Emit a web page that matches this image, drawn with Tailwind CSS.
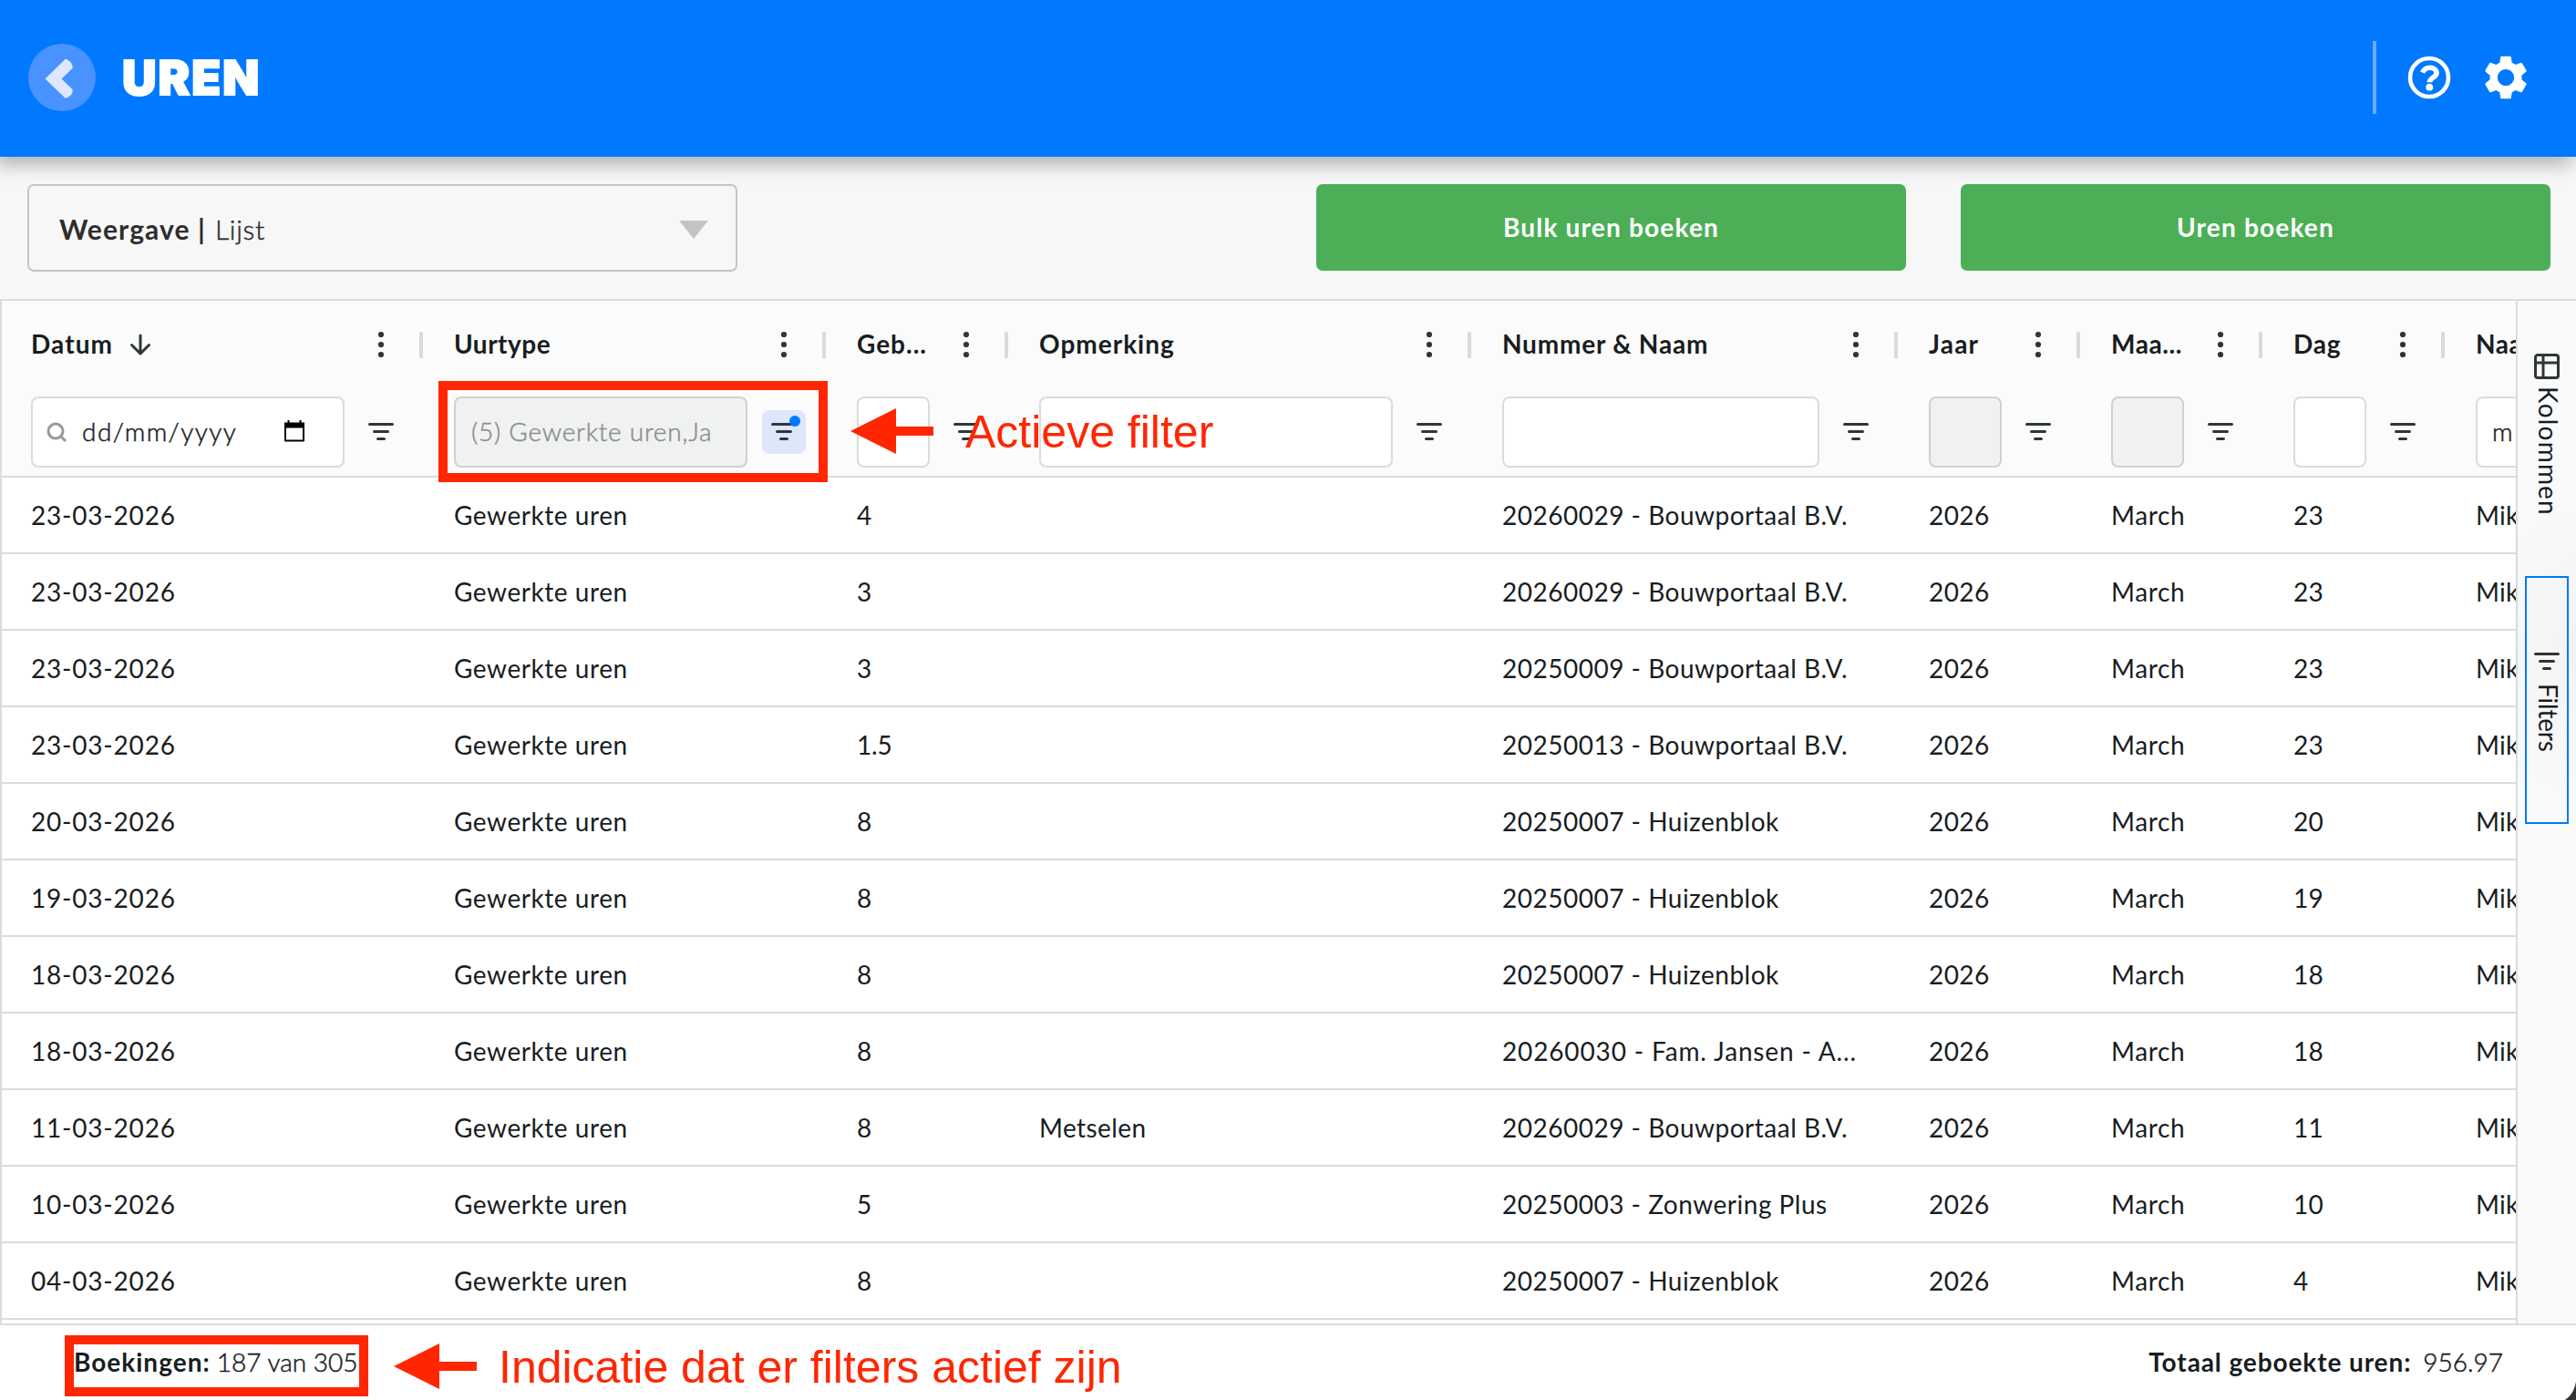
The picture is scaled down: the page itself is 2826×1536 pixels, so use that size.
<!DOCTYPE html>
<html lang="nl">
<head>
<meta charset="utf-8">
<title>Uren</title>
<script src="https://cdn.jsdelivr.net/npm/@tailwindcss/browser@4"></script>
</head>
<body class="relative flex h-[1536px] w-[2826px] flex-col overflow-hidden bg-[#f7f7f7] font-[Lato,sans-serif] text-[28px] leading-none text-[#181d1f]">

<svg class="hidden">
  <symbol id="filter" viewBox="0 0 32 32"><path d="M3.5 7.5h25M8.500 15.500h15M12.500 23.500h7" fill="none" stroke="#2f3638" stroke-width="3" stroke-linecap="round"/></symbol>
  <symbol id="dots" viewBox="0 0 32 32"><g fill="#2f3638"><circle cx="16" cy="5" r="3.100"/><circle cx="16" cy="16" r="3.100"/><circle cx="16" cy="27" r="3.100"/></g></symbol>
</svg>

<header class="relative z-10 flex h-[172px] shrink-0 items-center bg-[#0078ff] pr-[49px] pl-[31px] shadow-[-5px_8px_20px_rgba(0,0,0,0.3)]">
  <div class="mb-[2px] flex size-[74px] items-center justify-center rounded-full bg-[#4893ff]">
    <svg class="size-[74px]" viewBox="0 0 74 74"><path d="M41 16.500 Q50 21 48.500 27 L36.500 38.500 L48.500 50 Q50 56 41 60 L18.500 38.500 Z" fill="#dbe8ff"/></svg>
  </div>
  <h1 class="mb-[1px] ml-[29px] font-[Inter,sans-serif] text-[52px] leading-none font-black tracking-[2px] text-white [-webkit-text-stroke:2px_white]">UREN</h1>
  <div class="mb-[2px] ml-auto flex items-center">
    <div class="mr-[30px] h-[80px] w-[4px] bg-[#6fa8ff]"></div>
    <svg class="mr-[28px] size-[56px]" viewBox="0 0 56 56"><circle cx="28" cy="28" r="21" fill="none" stroke="#fff" stroke-width="4.600"/><path d="M20.500 22.500 C22.500 18.300 25.500 17.200 28.700 17.200 C33 17.200 36 19.500 36 23.200 C36 28 28.300 28 28.300 33.300" fill="none" stroke="#fff" stroke-width="5.600"/><circle cx="28.200" cy="38.700" r="3.900" fill="#fff"/></svg>
    <svg class="size-[56px]" viewBox="0 0 24 24"><path fill="#fff" d="M19.430 12.980c.04-.32.07-.64.07-.98s-.03-.66-.07-.98l2.110-1.650c.19-.15.24-.42.12-.64l-2-3.460c-.12-.22-.39-.3-.61-.22l-2.490 1c-.52-.4-1.080-.73-1.690-.98l-.38-2.650C14.460 2.180 14.250 2 14 2h-4c-.25 0-.46.18-.49.42l-.38 2.650c-.61.25-1.170.59-1.690.98l-2.490-1c-.23-.09-.49 0-.61.22l-2 3.460c-.13.22-.07.49.12.64l2.110 1.650c-.04.32-.07.65-.07.98s.03.66.07.98l-2.110 1.650c-.19.15-.24.42-.12.64l2 3.460c.12.22.39.3.61.22l2.490-1c.52.4 1.080.73 1.690.98l.38 2.650c.03.24.24.42.49.42h4c.25 0 .46-.18.49-.42l.38-2.650c.61-.25 1.170-.59 1.690-.98l2.490 1c.23.09.49 0 .61-.22l2-3.460c.12-.22.07-.49-.12-.64l-2.110-1.650zM12 15.900c-2.150 0-3.900-1.750-3.900-3.900s1.750-3.900 3.900-3.900 3.900 1.750 3.900 3.900-1.750 3.900-3.900 3.900z"/></svg>
  </div>
</header>

<section class="flex h-[156px] shrink-0 items-start pt-[30px] pr-[28px] pl-[30px]">
  <div class="flex h-[96px] w-[779px] items-center rounded-[7px] border-2 border-[#c4c4c4] pr-[30px] pl-[33px] text-[30px] text-[#2e2e2e]">
    <span class="pt-[2px]"><b class="tracking-[1.100px]">Weergave |</b><span class="ml-[10px] font-light tracking-[0.700px] [-webkit-text-stroke:0.5px_#2e2e2e]">Lijst</span></span>
    <svg class="mt-[4px] ml-auto h-[20px] w-[32px]" viewBox="0 0 32 20"><path d="M0 0h32L16 20z" fill="#c4c4c4"/></svg>
  </div>
  <button class="ml-auto flex h-[95px] w-[647px] items-center justify-center rounded-[7px] bg-[#4caf57] pb-[2px] font-bold tracking-[1.200px] text-white">Bulk uren boeken</button>
  <button class="ml-[60px] flex h-[95px] w-[647px] items-center justify-center rounded-[7px] bg-[#4caf57] pb-[2px] font-bold tracking-[1.200px] text-white">Uren boeken</button>
</section>

<main class="flex h-[1126px] shrink-0 border-t-2 border-l-2 border-b-2 border-[#dcdcdc] bg-white">
  <div class="flex w-[2758px] shrink-0 flex-col overflow-hidden">
    <div id="head" class="flex h-[194px] w-[2900px] shrink-0 border-b-2 border-[#dadcdc] bg-[#fbfbfb]"></div>
    <div id="rows" class="flex w-[2900px] flex-col"></div>
  </div>
  <aside class="flex grow flex-col items-start border-l-2 border-[#dadcdc] bg-[#fafafa] bg-[radial-gradient(circle_at_110px_385px,#ececec_0px,#f5f5f5_70px,#fafafa_190px)] pt-[50px] pl-[8px]">
    <div class="flex h-[252px] w-[48px] flex-col items-center pt-[8px]">
      <svg class="h-[28px] w-[28px]" viewBox="0 0 28 28"><path d="M4 1.500h20a2.500 2.500 0 0 1 2.500 2.500v20a2.500 2.500 0 0 1-2.500 2.500H4A2.500 2.500 0 0 1 1.500 24V4A2.500 2.500 0 0 1 4 1.500zM1.500 10h25M10 1.500v25" fill="none" stroke="#2f3638" stroke-width="3"/></svg>
      <span class="mt-[8px] ml-[3px] leading-[28px] tracking-[1.200px] [writing-mode:vertical-rl]">Kolommen</span>
    </div>
    <div class="flex h-[272px] w-[48px] flex-col items-center border-2 border-[#0078ff] pt-[76px]">
      <svg class="size-[32px]"><use href="#filter"/></svg>
      <span class="mt-[8px] ml-[3px] leading-[28px] tracking-[-0.200px] [writing-mode:vertical-rl]">Filters</span>
    </div>
  </aside>
</main>

<footer class="flex h-[82px] shrink-0 items-center bg-white pt-[4px] pr-[80px] pb-[6px] pl-[81px]">
  <span><b class="tracking-[1px]">Boekingen:</b> <span class="font-light [-webkit-text-stroke:0.5px_#181d1f]">187 van 305</span></span>
  <span class="ml-auto"><b class="tracking-[0.900px]">Totaal geboekte uren:</b><span class="ml-[13px] font-light [-webkit-text-stroke:0.5px_#181d1f]">956.97</span></span>
</footer>

<!-- annotations -->
<div class="absolute top-[418px] left-[481px] h-[111px] w-[427px] border-[10px] border-[#ff2600]"></div>
<svg class="absolute top-[448px] left-[933px] h-[50px] w-[91px]" viewBox="0 0 91 50"><path d="M0 25L50 0v20h41v10H50v20z" fill="#ff2600"/></svg>
<div class="absolute top-[449px] left-[1059px] font-['Liberation_Sans',sans-serif] text-[50px] leading-[50px] whitespace-nowrap text-[#ff2600]">Actieve filter</div>
<div class="absolute top-[1465px] left-[71px] h-[67px] w-[333px] border-[10px] border-[#ff2600]"></div>
<svg class="absolute top-[1474px] left-[432px] h-[50px] w-[91px]" viewBox="0 0 91 50"><path d="M0 25L50 0v20h41v10H50v20z" fill="#ff2600"/></svg>
<div class="absolute top-[1475px] left-[547px] font-['Liberation_Sans',sans-serif] text-[50px] leading-[50px] whitespace-nowrap text-[#ff2600]">Indicatie dat er filters actief zijn</div>
<svg class="absolute right-0 bottom-0 h-[20px] w-[12px]" viewBox="0 0 12 20"><path d="M12 0Q10 13 0 20H12z" fill="#333"/></svg>

<script>
const search = '<svg class="ml-[14px] size-[24px]" viewBox="0 0 24 24"><circle cx="11" cy="11" r="8" fill="none" stroke="#999" stroke-width="3"/><path d="M16.500 16.500l5.500 5.500" stroke="#999" stroke-width="3"/></svg>';
const calendar = '<svg class="mr-[42px] mb-[2px] ml-auto h-[26px] w-[22px]" viewBox="0 0 22 26"><path d="M1 5v18.500h20V5z" fill="none" stroke="#000" stroke-width="2" stroke-linejoin="round"/><path d="M0 3.500h22v6H0zM3.500 1h2v4h-2zM16.500 1h2v4h-2z"/></svg>';
const arrow = '<svg class="ml-[17px] size-[26px]" viewBox="0 0 26 26"><path d="M13 3v20M3.500 13.500L13 23l9.500-9.500" fill="none" stroke="#2f3638" stroke-width="3" stroke-linecap="round" stroke-linejoin="round"/></svg>';
const white = 'border-[#dadcdc] bg-white';
const grey = 'border-[#cfd1d1] bg-[#f0f2f1]';
const cols = [
  {w: 'w-[464px]', t: 'Datum', tr: 'tracking-[1.100px]', ct: 'tracking-[0.800px]', box: white, icon: arrow, inner: search + '<span class="mb-[2px] ml-[16px] font-light tracking-[1.450px] [-webkit-text-stroke:0.5px_#181d1f]">dd/mm/yyyy</span>' + calendar},
  {w: 'w-[442px]', t: 'Uurtype', tr: 'tracking-[0.500px]', ct: 'tracking-[0.550px]', box: grey, active: true, inner: '<span class="mb-[2px] ml-[17px] font-light tracking-[0.750px] text-[#8c8f8f] [-webkit-text-stroke:0.5px_#8c8f8f]">(5) Gewerkte uren,Ja</span>'},
  {w: 'w-[200px]', t: 'Geb...', tr: 'tracking-[1px]', ct: 'tracking-[-0.200px]', box: white},
  {w: 'w-[508px]', t: 'Opmerking', tr: 'tracking-[1px]', ct: 'tracking-[0.400px]', box: white},
  {w: 'w-[468px]', t: 'Nummer &amp; Naam', tr: 'tracking-[0.800px]', ct: 'tracking-[0.500px]', box: white},
  {w: 'w-[200px]', t: 'Jaar', tr: 'tracking-[1.200px]', ct: 'tracking-[0.400px]', box: grey},
  {w: 'w-[200px]', t: 'Maa...', tr: 'tracking-[0.600px]', ct: 'tracking-[0.600px]', box: grey},
  {w: 'w-[200px]', t: 'Dag', tr: 'tracking-[0.800px]', ct: 'tracking-[0.300px]', box: white},
  {w: 'w-[300px]', t: 'Naam', tr: 'tracking-[0.600px]', ct: 'tracking-[0.300px]', box: white, inner: '<span class="mb-[2px] ml-[16px] font-light [-webkit-text-stroke:0.5px_#181d1f]">m</span>'},
];
document.getElementById('head').innerHTML = cols.map(c => `
  <div class="flex shrink-0 flex-col ${c.w}">
    <div class="flex h-[96px] items-center pl-[32px]">
      <b class="mb-[2px] ${c.tr}">${c.t}</b>${c.icon || ''}
      <svg class="mr-[26px] ml-auto size-[32px]"><use href="#dots"/></svg>
      <div class="mr-[2px] h-[29px] w-[4px] bg-[#dadada]"></div>
    </div>
    <div class="flex h-[96px] items-center gap-[16px] pr-[24px] pl-[32px]">
      <div class="flex h-[78px] min-w-0 grow items-center rounded-[8px] border-2 ${c.box}">${c.inner || ''}</div>
      <div class="relative flex size-[48px] shrink-0 items-center justify-center rounded-[8px] ${c.active ? 'bg-[#dce7fc]' : ''}">
        <svg class="size-[32px]"><use href="#filter"/></svg>
        ${c.active ? '<i class="absolute top-[6px] right-[6px] size-[12px] rounded-full bg-[#0078ff]"></i>' : ''}
      </div>
    </div>
  </div>`).join('');

const data = [
  ['23-03-2026', '4', '', '20260029 - Bouwportaal B.V.', '23'],
  ['23-03-2026', '3', '', '20260029 - Bouwportaal B.V.', '23'],
  ['23-03-2026', '3', '', '20250009 - Bouwportaal B.V.', '23'],
  ['23-03-2026', '1.5', '', '20250013 - Bouwportaal B.V.', '23'],
  ['20-03-2026', '8', '', '20250007 - Huizenblok', '20'],
  ['19-03-2026', '8', '', '20250007 - Huizenblok', '19'],
  ['18-03-2026', '8', '', '20250007 - Huizenblok', '18'],
  ['18-03-2026', '8', '', '20260030 - Fam. Jansen - A...', '18'],
  ['11-03-2026', '8', 'Metselen', '20260029 - Bouwportaal B.V.', '11'],
  ['10-03-2026', '5', '', '20250003 - Zonwering Plus', '10'],
  ['04-03-2026', '8', '', '20250007 - Huizenblok', '4'],
];
document.getElementById('rows').innerHTML = data.map(([d, h, o, n, day]) => {
  const cells = [d, 'Gewerkte uren', h, o, n, '2026', 'March', day, 'Mike'];
  return '<div class="flex h-[84px] shrink-0 items-center border-b-2 border-[#dadcdc]">' +
    cells.map((t, i) => `<div class="shrink-0 pl-[32px] whitespace-nowrap ${cols[i].w} ${t.endsWith('...') ? 'tracking-[0.850px]' : cols[i].ct}">${t}</div>`).join('') + '</div>';
}).join('');
</script>
</body>
</html>
